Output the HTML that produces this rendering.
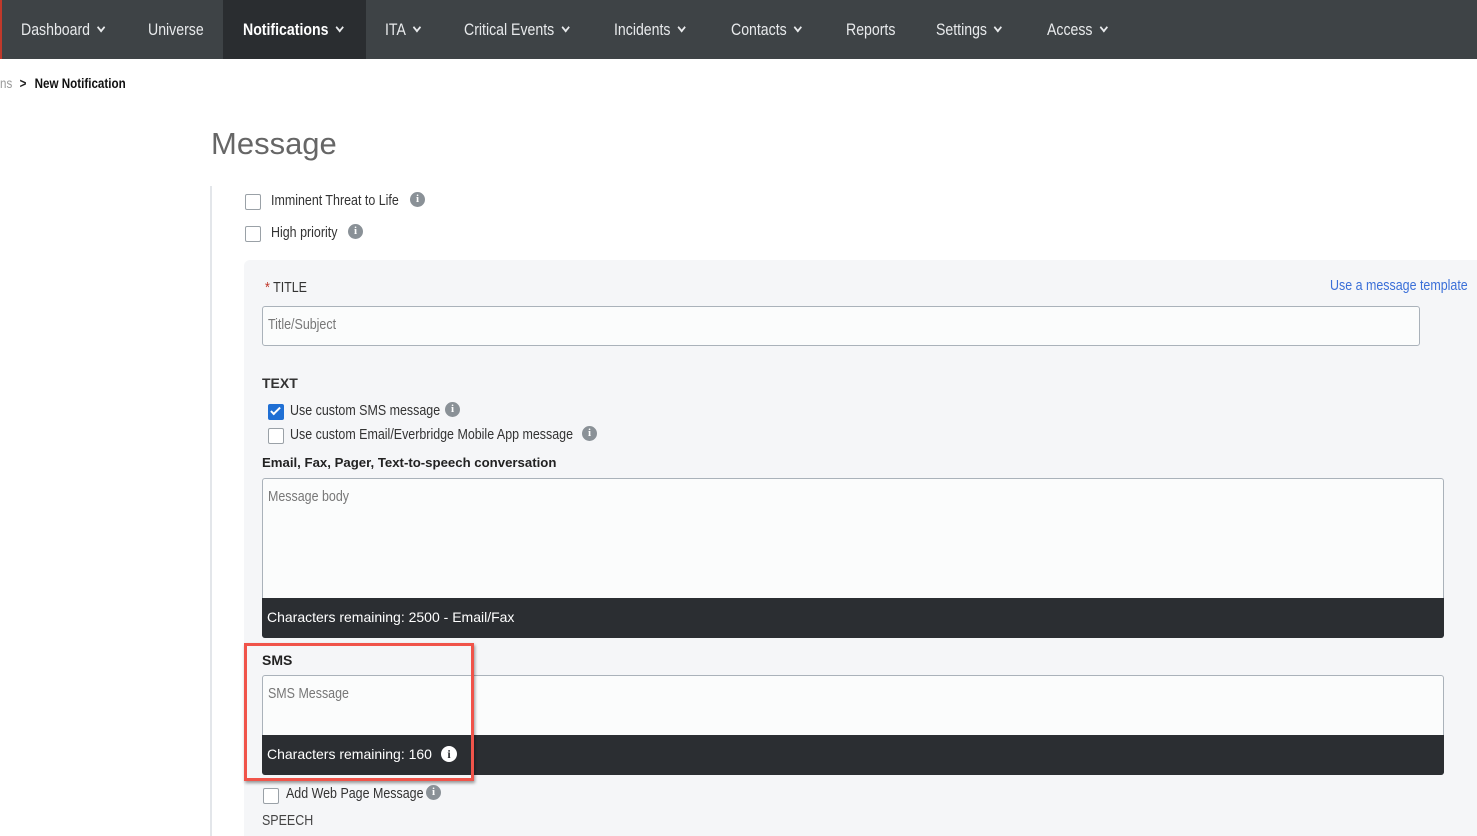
<!DOCTYPE html>
<html><head><meta charset="utf-8"><style>
*{margin:0;padding:0;box-sizing:border-box}
body{width:1477px;height:836px;overflow:hidden;background:#fff;position:relative;font-family:"Liberation Sans",sans-serif;color:#333}
.a{position:absolute;white-space:nowrap}
.c{transform:scaleX(.83);transform-origin:0 0}
nav{position:absolute;left:0;top:0;width:1477px;height:59px;background:#3e4346;border-left:2px solid #c0392b}
nav span{position:absolute;top:20px;font-size:17px;color:#e8eaec;white-space:nowrap;transform:scaleX(.83);transform-origin:0 0}
.chev{display:inline-block;width:7px;height:7px;border-right:2px solid #e8eaec;border-bottom:2px solid #e8eaec;transform:rotate(45deg);margin-left:10px;position:relative;top:-4px}
.cb{position:absolute;width:16px;height:16px;border:1px solid #9aa1a7;border-radius:2px;background:#fff}
.info{position:absolute;width:15px;height:15px;border-radius:50%;background:#8a9197;color:#fff;font:bold 11px "Liberation Serif",serif;text-align:center;line-height:15px}
.lbl{font-size:15px;color:#333}
.box{position:absolute;background:#fbfcfc;border:1px solid #aab2ba;border-radius:3px}
.dark{position:absolute;background:#2b2e32;color:#fff;font-size:14px}
</style></head><body>
<nav>
<div class="a" style="left:221px;top:0;width:143px;height:59px;background:#2a2d30"></div>
<span style="left:19px">Dashboard<i class="chev"></i></span>
<span style="left:146px">Universe</span>
<span style="left:241px;font-weight:bold;color:#fff">Notifications<i class="chev"></i></span>
<span style="left:383px">ITA<i class="chev"></i></span>
<span style="left:462px">Critical Events<i class="chev"></i></span>
<span style="left:612px">Incidents<i class="chev"></i></span>
<span style="left:729px">Contacts<i class="chev"></i></span>
<span style="left:844px">Reports</span>
<span style="left:934px">Settings<i class="chev"></i></span>
<span style="left:1045px">Access<i class="chev"></i></span>
</nav>
<div class="a c" style="left:0;top:75px;font-size:14px;color:#999">ns <b style="color:#222;margin-left:5px">&gt;</b> <b style="color:#111;margin-left:6px">New Notification</b></div>
<div class="a" style="left:211px;top:126px;font-size:31px;color:#666">Message</div>
<div class="a" style="left:210px;top:186px;width:2px;height:650px;background:#e3e6ea"></div>
<div class="cb" style="left:245px;top:194px"></div>
<div class="a lbl c" style="left:271px;top:192px">Imminent Threat to Life</div>
<div class="info" style="left:410px;top:192px">i</div>
<div class="cb" style="left:245px;top:226px"></div>
<div class="a lbl c" style="left:271px;top:224px">High priority</div>
<div class="info" style="left:348px;top:224px">i</div>
<div class="a" style="left:244px;top:260px;width:1233px;height:576px;background:#f5f6f8;border-radius:6px 0 0 0"></div>
<div class="a lbl c" style="left:265px;top:279px;font-size:15px"><span style="color:#c0392b">*</span> TITLE</div>
<div class="a c" style="left:1330px;top:277px;font-size:15px;color:#3a6fd8">Use a message template</div>
<div class="box" style="left:262px;top:306px;width:1158px;height:40px"></div>
<div class="a c" style="left:268px;top:316px;font-size:15px;color:#777">Title/Subject</div>
<div class="a" style="left:262px;top:375px;font-size:14px;font-weight:bold;color:#333">TEXT</div>
<div class="a" style="left:268px;top:404px;width:16px;height:16px;background:#1f6fd4;border-radius:2px"><div style="position:absolute;left:5px;top:1px;width:5px;height:10px;border-right:2px solid #fff;border-bottom:2px solid #fff;transform:rotate(45deg)"></div></div>
<div class="a lbl c" style="left:290px;top:402px">Use custom SMS message</div>
<div class="info" style="left:445px;top:402px">i</div>
<div class="cb" style="left:268px;top:428px"></div>
<div class="a lbl c" style="left:290px;top:426px">Use custom Email/Everbridge Mobile App message</div>
<div class="info" style="left:582px;top:426px">i</div>
<div class="a" style="left:262px;top:455px;font-size:13.2px;font-weight:bold;color:#222">Email, Fax, Pager, Text-to-speech conversation</div>
<div class="box" style="left:262px;top:478px;width:1182px;height:160px"></div>
<div class="a c" style="left:268px;top:488px;font-size:15px;color:#777">Message body</div>
<div class="dark" style="left:262px;top:598px;width:1182px;height:40px;padding:11px 5px;border-radius:0 0 3px 3px">Characters remaining: 2500 - Email/Fax</div>
<div class="a" style="left:262px;top:652px;font-size:14px;font-weight:bold;color:#222">SMS</div>
<div class="box" style="left:262px;top:675px;width:1182px;height:100px"></div>
<div class="a c" style="left:268px;top:685px;font-size:15px;color:#777">SMS Message</div>
<div class="dark" style="left:262px;top:735px;width:1182px;height:40px;padding:11px 5px;border-radius:0 0 3px 3px">Characters remaining: 160 <span style="position:absolute;left:179px;top:11px;width:16px;height:16px;border-radius:50%;background:#fff;color:#2b2e32;font:bold 12px 'Liberation Serif',serif;text-align:center;line-height:16px">i</span></div>
<div class="a" style="left:244px;top:643px;width:230px;height:138px;border:3px solid #f0544a;box-shadow:1px 2px 3px rgba(0,0,0,.4)"></div>
<div class="cb" style="left:263px;top:788px"></div>
<div class="a lbl c" style="left:286px;top:785px">Add Web Page Message</div>
<div class="info" style="left:426px;top:785px">i</div>
<div class="a c" style="left:262px;top:812px;font-size:15px;color:#444">SPEECH</div>
</body></html>
